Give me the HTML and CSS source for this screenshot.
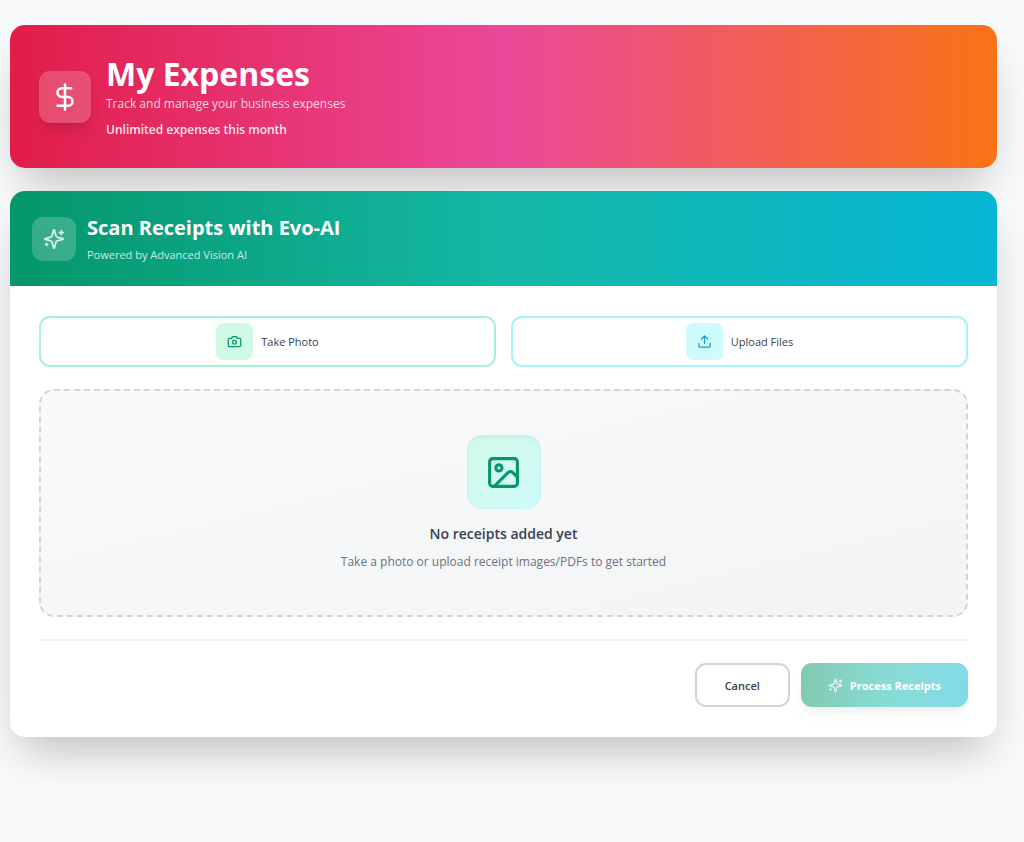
FILE: index.html
```html
<!DOCTYPE html>
<html lang="en">
<head>
  <meta charset="UTF-8">
  <meta name="viewport" content="width=device-width, initial-scale=1.0">
  <title>My Expenses</title>
  <link rel="stylesheet" href="styles.css">
</head>
<body>
  <main class="page">
    <header class="hero">
      <div class="hero-icon">
        <svg class="icon" width="30" height="30" viewBox="0 0 24 24">
          <line x1="12" x2="12" y1="2" y2="22"/>
          <path d="M17 5H9.5a3.5 3.5 0 0 0 0 7h5a3.5 3.5 0 0 1 0 7H6"/>
        </svg>
      </div>
      <div>
        <h1>My Expenses</h1>
        <p class="hero-sub">Track and manage your business expenses</p>
        <p class="hero-plan">Unlimited expenses this month</p>
      </div>
    </header>

    <section class="card">
      <div class="card-header">
        <div class="card-icon">
          <svg class="icon" width="22" height="22" viewBox="0 0 24 24">
            <path d="M9.937 15.5A2 2 0 0 0 8.5 14.063l-6.135-1.582a.5.5 0 0 1 0-.962L8.5 9.936A2 2 0 0 0 9.937 8.5l1.582-6.135a.5.5 0 0 1 .963 0L14.063 8.5A2 2 0 0 0 15.5 9.937l6.135 1.581a.5.5 0 0 1 0 .964L15.5 14.063a2 2 0 0 0-1.437 1.437l-1.582 6.135a.5.5 0 0 1-.963 0z"/>
            <path d="M20 3v4M22 5h-4M4 17v2M5 18H3"/>
          </svg>
        </div>
        <div>
          <h2>Scan Receipts with Evo-AI</h2>
          <p class="card-sub">Powered by Advanced Vision AI</p>
        </div>
      </div>

      <div class="card-body">
        <div class="sources">
          <button class="source source-photo" type="button">
            <span class="source-icon">
              <svg class="icon" width="15" height="15" viewBox="0 0 24 24">
                <path d="M14.5 4h-5L7 7H4a2 2 0 0 0-2 2v9a2 2 0 0 0 2 2h16a2 2 0 0 0 2-2V9a2 2 0 0 0-2-2h-3l-2.500-3z"/>
                <circle cx="12" cy="13" r="3"/>
              </svg>
            </span>
            Take Photo
          </button>
          <button class="source source-upload" type="button">
            <span class="source-icon">
              <svg class="icon" width="15" height="15" viewBox="0 0 24 24">
                <path d="M21 15v4a2 2 0 0 1-2 2H5a2 2 0 0 1-2-2v-4"/>
                <path d="M17 8l-5-5-5 5M12 3v12"/>
              </svg>
            </span>
            Upload Files
          </button>
        </div>

        <div class="empty">
          <div class="empty-icon">
            <svg class="icon" width="37" height="37" viewBox="0 0 24 24">
              <rect width="18" height="18" x="3" y="3" rx="2"/>
              <circle cx="9" cy="9" r="2"/>
              <path d="m21 15-3.086-3.086a2 2 0 0 0-2.828 0L6 21"/>
            </svg>
          </div>
          <h3>No receipts added yet</h3>
          <p>Take a photo or upload receipt images/PDFs to get started</p>
        </div>

        <div class="actions">
          <button class="btn btn-cancel" type="button">Cancel</button>
          <button class="btn btn-process" type="button" disabled>
            <svg class="icon" width="15" height="15" viewBox="0 0 24 24">
              <path d="M9.937 15.5A2 2 0 0 0 8.5 14.063l-6.135-1.582a.5.5 0 0 1 0-.962L8.5 9.936A2 2 0 0 0 9.937 8.5l1.582-6.135a.5.5 0 0 1 .963 0L14.063 8.5A2 2 0 0 0 15.5 9.937l6.135 1.581a.5.5 0 0 1 0 .964L15.5 14.063a2 2 0 0 0-1.437 1.437l-1.582 6.135a.5.5 0 0 1-.963 0z"/>
              <path d="M20 3v4M22 5h-4M4 17v2M5 18H3"/>
            </svg>
            Process Receipts
          </button>
        </div>
      </div>
    </section>
  </main>
</body>
</html>
```
FILE: styles.css
```css
* {
  box-sizing: border-box;
}
body {
  margin: 0;
  min-height: 100vh;
  background: #f9fafb;
  font-family: "Segoe UI", "Open Sans", "Noto Sans", sans-serif;
  color: #374151;
}
h1, h2, h3, p {
  margin: 0;
}
button {
  font-family: inherit;
  cursor: pointer;
}
.page {
  display: flex;
  flex-direction: column;
  gap: 23px;
  padding: 25px 27px 25px 10px;
}
.icon {
  display: block;
  fill: none;
  stroke: currentColor;
  stroke-width: 2;
  stroke-linecap: round;
  stroke-linejoin: round;
}

/* Page banner */
.hero {
  display: flex;
  align-items: center;
  gap: 15px;
  padding: 29px;
  border-radius: 15px;
  background: linear-gradient(to right, #e11d48, #ec4899, #f97316);
  box-shadow: 0 23px 46px -11px rgba(0, 0, 0, 0.25);
  color: #fff;
}
.hero-icon {
  display: flex;
  align-items: center;
  justify-content: center;
  width: 52px;
  height: 52px;
  border-radius: 11px;
  background: rgba(255, 255, 255, 0.2);
  box-shadow: 0 9px 14px -3px rgba(0, 0, 0, 0.1), 0 4px 6px -4px rgba(0, 0, 0, 0.1);
}
h1 {
  font-size: 32px;
  line-height: 40px;
  font-weight: 700;
}
.hero-sub {
  font-size: 12px;
  line-height: 20px;
  color: rgba(255, 255, 255, 0.8);
}
.hero-plan {
  margin-top: 6px;
  font-size: 12px;
  line-height: 19px;
  font-weight: 600;
  color: rgba(255, 255, 255, 0.9);
}

/* Receipt scanner */
.card {
  border-radius: 15px;
  background: #fff;
  box-shadow: 0 23px 46px -11px rgba(0, 0, 0, 0.25);
  overflow: hidden;
}
.card-header {
  display: flex;
  align-items: center;
  gap: 11px;
  padding: 22px;
  background: linear-gradient(to right, #059669, #14b8a6, #06b6d4);
  color: #fff;
}
.card-icon {
  display: flex;
  align-items: center;
  justify-content: center;
  width: 44px;
  height: 44px;
  border-radius: 11px;
  background: rgba(255, 255, 255, 0.2);
  color: rgba(255, 255, 255, 0.8);
}
h2 {
  font-size: 20px;
  line-height: 29px;
  font-weight: 700;
}
.card-sub {
  margin-top: 3px;
  font-size: 11px;
  line-height: 19px;
  color: rgba(255, 255, 255, 0.8);
}
.card-body {
  padding: 30px 29px;
}
.sources {
  display: grid;
  grid-template-columns: 1fr 1fr;
  gap: 15px;
}
.source {
  display: flex;
  align-items: center;
  justify-content: center;
  gap: 8px;
  height: 51px;
  border: 2px solid;
  border-radius: 11px;
  background: #fff;
  color: #374151;
  font-size: 11px;
  font-weight: 500;
}
.source-photo {
  border-color: #a7f3d0;
}
.source-upload {
  border-color: #a5f3fc;
}
.source-icon {
  display: flex;
  align-items: center;
  justify-content: center;
  width: 37px;
  height: 37px;
  border-radius: 7px;
}
.source-photo .source-icon {
  background: #d1fae5;
  color: #059669;
}
.source-upload .source-icon {
  background: #cffafe;
  color: #0fa3c2;
}
.empty {
  display: flex;
  flex-direction: column;
  align-items: center;
  margin-top: 22px;
  padding: 44px 20px;
  border: 2px dashed #d1d5db;
  border-radius: 15px;
  background: linear-gradient(to bottom right, #f9fafb, #f3f4f6);
  text-align: center;
}
.empty-icon {
  display: flex;
  align-items: center;
  justify-content: center;
  width: 74px;
  height: 74px;
  margin-bottom: 13px;
  border-radius: 15px;
  background: linear-gradient(to bottom right, #d1fae5, #cffafe);
  box-shadow: inset 0 2px 4px rgba(0, 0, 0, 0.05);
  color: #059669;
}
h3 {
  font-size: 14px;
  line-height: 24px;
  font-weight: 600;
}
.empty p {
  margin-top: 6px;
  font-size: 12px;
  line-height: 19px;
  color: #6b7280;
}
.actions {
  display: flex;
  justify-content: flex-end;
  gap: 11px;
  margin-top: 22px;
  padding-top: 22px;
  border-top: 2px solid #f3f4f6;
}
.btn {
  display: flex;
  align-items: center;
  justify-content: center;
  gap: 7px;
  height: 44px;
  border: 0;
  border-radius: 11px;
  font-size: 11px;
}
.btn-cancel {
  padding: 0 28px;
  border: 2px solid #d1d5db;
  background: #fff;
  color: #374151;
  font-weight: 600;
}
.btn-process {
  padding: 0 27px;
  background: linear-gradient(to right, #059669, #14b8a6, #06b6d4);
  box-shadow: 0 9px 14px -3px rgba(0, 0, 0, 0.1), 0 4px 6px -4px rgba(0, 0, 0, 0.1);
  color: #fff;
  font-weight: 700;
  opacity: 0.5;
}
.btn-process .icon {
  opacity: 0.8;
}
```
